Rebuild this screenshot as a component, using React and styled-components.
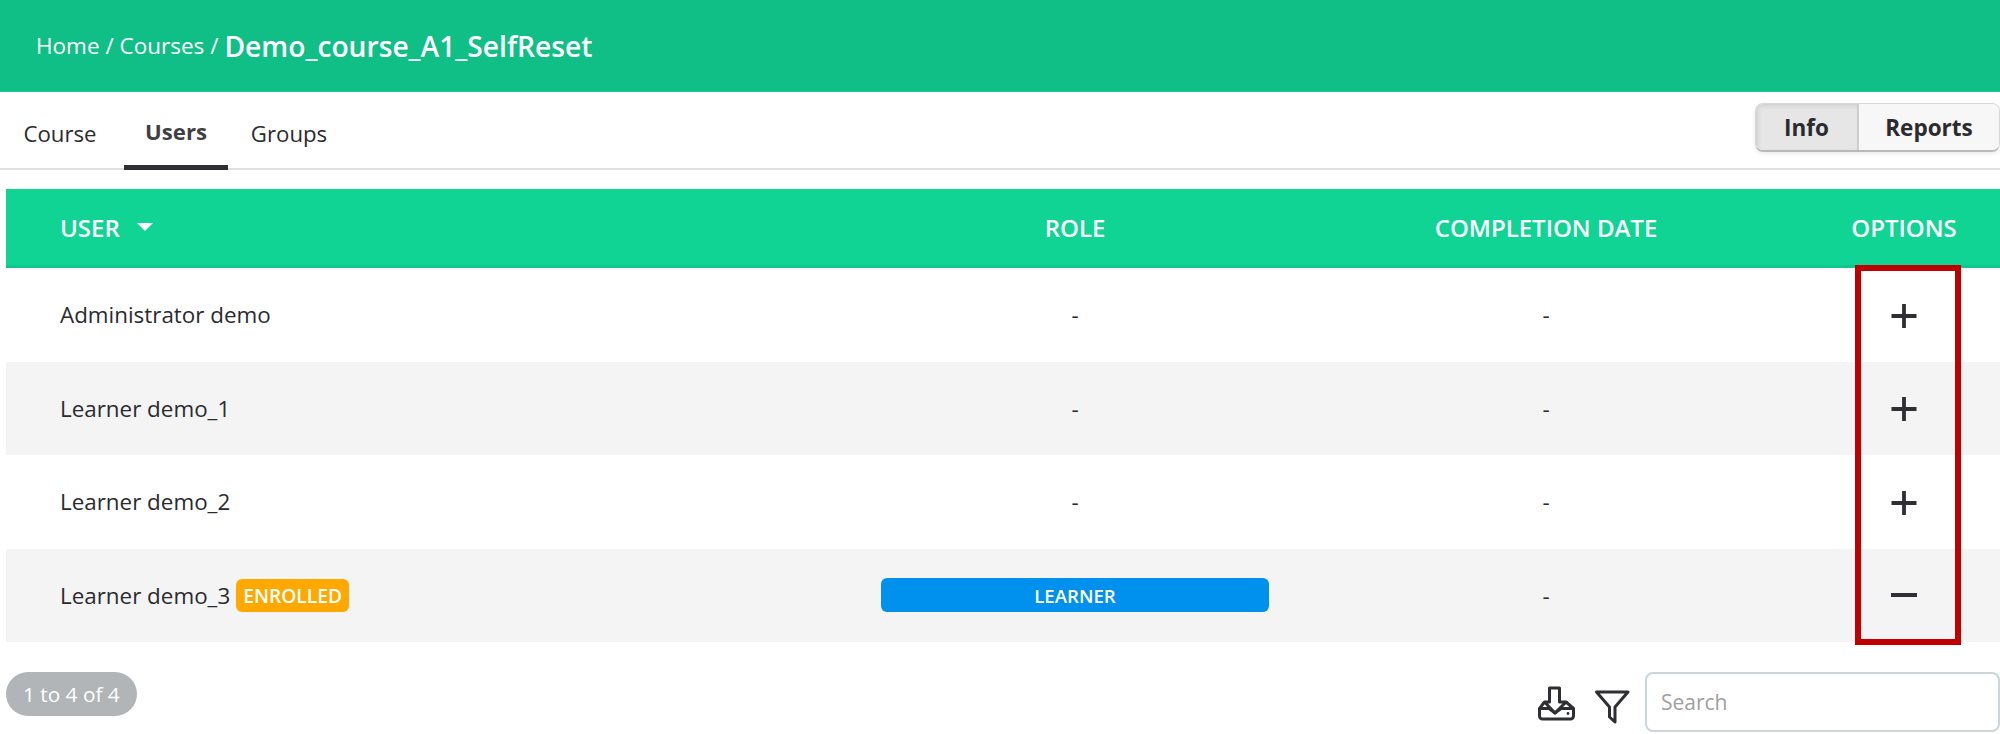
import React from "react";
import styled, { createGlobalStyle } from "styled-components";

const GlobalStyle = createGlobalStyle`
  html, body {
    margin: 0;
    padding: 0;
    background: #fff;
    font-family: "Open Sans", "Liberation Sans", sans-serif;
    color: #2b2b2f;
  }
`;

const Page = styled.div`
  width: 2000px;
  height: 734px;
  overflow: hidden;
`;
const Banner = styled.header`
  height: 91px;
  border-bottom: 1px solid #13d08f;
  background: #0fbf85;
  color: #fff;
  display: flex;
  align-items: center;
  padding-left: 36px;
  font-size: 22.5px;
  gap: 6px;
`;
const CourseName = styled.span`
  font-size: 28.2px;
  font-weight: 600;
`;
const TabBar = styled.nav`
  height: 75px;
  margin-top: 1px;
  border-bottom: 2px solid #e0e0e0;
  display: flex;
  align-items: flex-end;
  justify-content: space-between;
`;
const Tabs = styled.div`
  display: flex;
`;
const Tab = styled.a`
  height: 75px;
  box-sizing: border-box;
  padding-top: ${(p) => (p.$active ? 3 : 6)}px;
  display: flex;
  align-items: center;
  justify-content: center;
  width: ${(p) => p.$w}px;
  margin-right: ${(p) => p.$gap || 0}px;
  margin-bottom: -2px;
  font-size: 22.2px;
  font-weight: ${(p) => (p.$active ? 700 : 400)};
  color: ${(p) => (p.$active ? "#3f3f44" : "#2b2b2f")};
  border-bottom: 5px solid ${(p) => (p.$active ? "#2f2f33" : "transparent")};
`;
const Switch = styled.div`
  align-self: flex-start;
  margin-top: 10px;
  display: flex;
  height: 46px;
  border: 1px solid #d8d8d8;
  border-bottom: 2px solid #b9b9b9;
  border-radius: 8px;
  overflow: hidden;
  box-shadow: 0 2px 4px rgba(0, 0, 0, 0.08);
`;
const SwitchButton = styled.div`
  display: flex;
  align-items: center;
  justify-content: center;
  width: ${(p) => p.$w}px;
  font-size: 22.5px;
  font-weight: 700;
  background: ${(p) => (p.$active ? "#e6e6e6" : "#f7f7f7")};
  border-right: ${(p) => (p.$active ? "2px solid #cfcfcf" : "none")};
  box-shadow: ${(p) => (p.$active ? "inset 2px 2px 4px rgba(0,0,0,0.1)" : "none")};
`;
const TableArea = styled.section`
  position: relative;
  margin: 19px 0 0 6px;
`;
const columns = "860px 418px 524px 192px";
const HeadRow = styled.div`
  display: grid;
  grid-template-columns: ${columns};
  height: 76px;
  border-bottom: 3px solid #0fc88c;
  background: #10d493;
  color: #fff;
  font-size: 24px;
  font-weight: 600;
`;
const HeadCell = styled.div`
  display: flex;
  align-items: center;
  justify-content: ${(p) => (p.$left ? "flex-start" : "center")};
  padding-left: ${(p) => (p.$left ? "54px" : "0")};
`;
const SortCaret = styled.span`
  margin-left: 17px;
  width: 0;
  height: 0;
  border-left: 8px solid transparent;
  border-right: 8px solid transparent;
  border-top: 8px solid #fff;
`;
const Row = styled.div`
  display: grid;
  grid-template-columns: ${columns};
  height: 93.5px;
  background: ${(p) => (p.$shaded ? "#f4f4f4" : "#fff")};
  font-size: 22.4px;
`;
const Cell = styled.div`
  display: flex;
  align-items: center;
  justify-content: ${(p) => (p.$left ? "flex-start" : "center")};
  padding-left: ${(p) => (p.$left ? "54px" : "0")};
`;
const Enrolled = styled.span`
  margin-left: 6px;
  height: 33px;
  padding: 0 7px;
  border-radius: 6px;
  background: #ffa900;
  color: #fff;
  font-size: 19.2px;
  font-weight: 600;
  display: flex;
  align-items: center;
`;
const RoleBadge = styled.span`
  width: 388px;
  height: 34px;
  border-radius: 6px;
  background: #0090ee;
  color: #fff;
  font-size: 18.6px;
  font-weight: 600;
  display: flex;
  align-items: center;
  justify-content: center;
`;
const Highlight = styled.div`
  position: absolute;
  left: 1849px;
  top: 76px;
  width: 106px;
  height: 380px;
  box-sizing: border-box;
  border: 6px solid #c00000;
`;
const Footer = styled.footer`
  display: flex;
  align-items: flex-start;
  justify-content: space-between;
  margin: 30px 0 0 6px;
`;
const Counter = styled.div`
  height: 44px;
  padding: 0 17px;
  border-radius: 22px;
  background: #b1b5b7;
  color: #fff;
  font-size: 20.8px;
  display: flex;
  align-items: center;
`;
const Tools = styled.div`
  display: flex;
  align-items: center;
`;
const IconSlot = styled.span`
  display: flex;
  padding-top: 3px;
  margin-right: ${(p) => p.$gap}px;
`;
const SearchInput = styled.input`
  width: 355px;
  height: 60px;
  box-sizing: border-box;
  padding: 0 14px;
  border: 2px solid #ccd6da;
  border-radius: 8px;
  font-family: inherit;
  font-size: 21px;
  outline: none;
  &::placeholder {
    color: #a0a0a0;
  }
`;

const PlusIcon = () => (
  <svg width="30" height="30" viewBox="0 0 30 30">
    <path d="M15 4v24M2.5 16h25" stroke="#2f2f33" strokeWidth="3.8" fill="none" />
  </svg>
);
const MinusIcon = () => (
  <svg width="30" height="30" viewBox="0 0 30 30">
    <path d="M2 15h26" stroke="#2f2f33" strokeWidth="4" fill="none" />
  </svg>
);
const DownloadIcon = () => (
  <svg width="38" height="38" viewBox="0 0 38 38" fill="none" stroke="#2f2f33" strokeWidth="3" strokeLinejoin="round">
    <path d="M11.5 3h10v14H28L17 28 6.5 17h5z" />
    <path d="M6.5 17l-5 6.5V31a3 3 0 0 0 3 3h28a3 3 0 0 0 3-3v-7.5L28 17" />
    <path d="M1.5 23.5H11l6 4.5 6-4.5h12.5" />
    <circle cx="30" cy="28.5" r="1.4" fill="#2f2f33" stroke="none" />
  </svg>
);
const FilterIcon = () => (
  <svg width="36" height="40" viewBox="0 0 36 40" fill="none" stroke="#2f2f33" strokeWidth="3" strokeLinejoin="round">
    <path d="M2.5 8H34L21 23v15l-5.5-5V23z" />
  </svg>
);

const rows = [
  { name: "Administrator demo" },
  { name: "Learner demo_1", shaded: true },
  { name: "Learner demo_2" },
  { name: "Learner demo_3", shaded: true, enrolled: true },
];

function App() {
  return (
    <Page>
      <GlobalStyle />
      <Banner>
        <span>Home / Courses /</span>
        <CourseName>Demo_course_A1_SelfReset</CourseName>
      </Banner>
      <TabBar>
        <Tabs>
          <Tab $w={120} $gap={4}>
            Course
          </Tab>
          <Tab $w={104} $active>
            Users
          </Tab>
          <Tab $w={122}>Groups</Tab>
        </Tabs>
        <Switch>
          <SwitchButton $w={101} $active>
            Info
          </SwitchButton>
          <SwitchButton $w={140}>Reports</SwitchButton>
        </Switch>
      </TabBar>
      <TableArea>
        <HeadRow>
          <HeadCell $left>
            USER
            <SortCaret />
          </HeadCell>
          <HeadCell>ROLE</HeadCell>
          <HeadCell>COMPLETION DATE</HeadCell>
          <HeadCell>OPTIONS</HeadCell>
        </HeadRow>
        {rows.map((row) => (
          <Row key={row.name} $shaded={row.shaded}>
            <Cell $left>
              {row.name}
              {row.enrolled && <Enrolled>ENROLLED</Enrolled>}
            </Cell>
            <Cell>{row.enrolled ? <RoleBadge>LEARNER</RoleBadge> : "-"}</Cell>
            <Cell>-</Cell>
            <Cell>{row.enrolled ? <MinusIcon /> : <PlusIcon />}</Cell>
          </Row>
        ))}
        <Highlight />
      </TableArea>
      <Footer>
        <Counter>1 to 4 of 4</Counter>
        <Tools>
          <IconSlot $gap={18}>
            <DownloadIcon />
          </IconSlot>
          <IconSlot $gap={15}>
            <FilterIcon />
          </IconSlot>
          <SearchInput placeholder="Search" />
        </Tools>
      </Footer>
    </Page>
  );
}

export default App;
